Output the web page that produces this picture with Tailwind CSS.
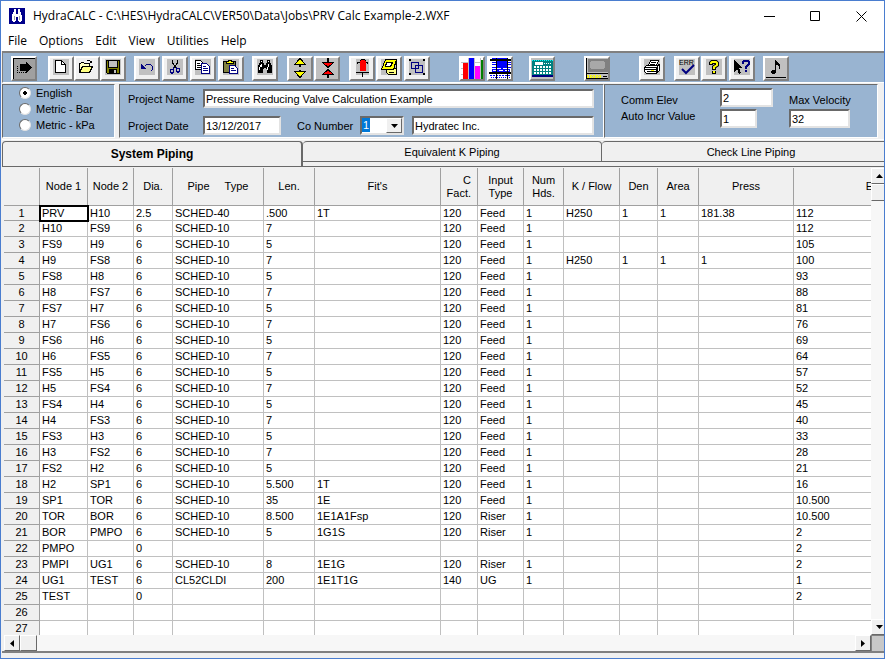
<!DOCTYPE html>
<html lang="en">
<head>
    <meta charset="UTF-8">
    <meta name="viewport" content="width=device-width, initial-scale=1.0">
    <title>HydraCALC</title>

    <!-- Tailwind CSS -->
    <script src="https://cdn.jsdelivr.net/npm/@tailwindcss/browser@4"></script>
</head>
<body class="h-screen flex flex-col overflow-hidden bg-[#f0f0f0] border border-[#4a7dcf] text-black text-[11px] leading-4 font-['Liberation_Sans',sans-serif]">

    <!-- Title bar -->
    <header class="flex items-center h-[30px] shrink-0 bg-white pl-2 font-['Open_Sans',sans-serif]">
        <svg class="size-4 mr-2" viewBox="0 0 16 16" shape-rendering="crispEdges">
            <rect width="16" height="16" fill="#00008b"/>
            <path d="M5 1h2v5h2V1h2v2l1 2 1 3v4l-1 2h-2l-1-2V9H7v3l-1 2H4l-1-2V8l1-3 1-2z" fill="#fff"/>
            <path d="M5 8h1v4H5zM10 8h1v4h-1z" fill="#a0a0a0"/>
        </svg>
        <h1 class="flex-1 text-[12px] whitespace-nowrap">HydraCALC - C:\HES\HydraCALC\VER50\Data\Jobs\PRV Calc Example-2.WXF</h1>
        <div class="flex self-stretch">
            <button aria-label="Minimize" class="w-[46px] flex items-center justify-center">
                <svg class="size-[11px]" viewBox="0 0 11 11"><path d="M0 5.5h11" stroke="#000"/></svg>
            </button>
            <button aria-label="Maximize" class="w-[46px] flex items-center justify-center">
                <svg class="size-[11px]" viewBox="0 0 11 11"><path d="M.5 .5h9v9h-9z" fill="none" stroke="#000"/></svg>
            </button>
            <button aria-label="Close" class="w-[46px] flex items-center justify-center">
                <svg class="size-[11px]" viewBox="0 0 11 11"><path d="M.5 .5l10 10M10.5 .5l-10 10" stroke="#000"/></svg>
            </button>
        </div>
    </header>

    <!-- Menu -->
    <nav class="flex items-center gap-3 h-5 shrink-0 bg-white pl-[7px] text-[12px] font-['Open_Sans',sans-serif]">
        <button>File</button>
        <button>Options</button>
        <button>Edit</button>
        <button>View</button>
        <button>Utilities</button>
        <button>Help</button>
    </nav>

    <!-- Toolbar -->
    <div class="flex items-start shrink-0 h-8 ml-px pl-[8px] pt-[3px] bg-[#99b4d1] border-t-2 border-l border-[#808080] border-b border-b-white">
        <button aria-label="Run" class="w-[26px] h-[25px] border-2 border-white border-r-[#808080] border-b-[#808080] bg-[#a0a0a0]">
            <svg class="w-[22px] h-[21px]" viewBox="0 0 22 21" shape-rendering="crispEdges">
                <path d="M.5 21V.5H22" fill="none" stroke="#000"/>
                <path d="M7 6h6V3l6 6.5-6 6.5v-3H7z"/>
                <path d="M4.5 8v7M4 14.5h9" fill="none" stroke="#000" stroke-dasharray="1 1"/>
            </svg>
        </button>

        <div class="flex ml-[11px]">
            <button aria-label="New" class="w-[26px] h-[25px] border-2 border-white border-r-[#808080] border-b-[#808080] bg-[#f0f0f0]">
                <svg class="w-[22px] h-[21px]" viewBox="0 0 22 21" shape-rendering="crispEdges">
                    <rect x="3" y="1" width="16" height="16" fill="#c0c0c0"/>
                    <path d="M5.5 2.5h6l4 4v8h-10z" fill="#fff" stroke="#000"/>
                    <path d="M11.5 2.5v4h4" fill="none" stroke="#000"/>
                </svg>
            </button>
            <button aria-label="Open" class="w-[26px] h-[25px] border-2 border-white border-r-[#808080] border-b-[#808080] bg-[#f0f0f0]">
                <svg class="w-[22px] h-[21px]" viewBox="0 0 22 21" shape-rendering="crispEdges">
                    <path d="M3.5 14.5v-9h1l1-1h2l1 1h5v3" fill="#ffffc0" stroke="#000"/>
                    <path d="M3.5 14.5l3-6h10l-3 6z" fill="#ffff80" stroke="#000"/>
                    <path d="M10.5 3.5l1-1h2l2 2m0-2v2h-2" fill="none" stroke="#000"/>
                </svg>
            </button>
            <button aria-label="Save" class="w-[26px] h-[25px] border-2 border-white border-r-[#808080] border-b-[#808080] bg-[#f0f0f0]">
                <svg class="w-[22px] h-[21px]" viewBox="0 0 22 21" shape-rendering="crispEdges">
                    <rect x="3" y="1" width="16" height="16" fill="#c0c0c0"/>
                    <path d="M4.5 2.5h13v13h-12l-1-1z" fill="#808000" stroke="#000"/>
                    <rect x="7" y="3" width="8" height="6" fill="#c0c0c0"/>
                    <path d="M6.5 3v6h9V3" fill="none" stroke="#000"/>
                    <rect x="7" y="11" width="8" height="5"/>
                    <rect x="12" y="12" width="2" height="3" fill="#c0c0c0"/>
                </svg>
            </button>
        </div>

        <div class="flex gap-0.5 ml-2">
            <button aria-label="Undo" class="w-[26px] h-[25px] border-2 border-white border-r-[#808080] border-b-[#808080] bg-[#f0f0f0]">
                <svg class="w-[22px] h-[21px]" viewBox="0 0 22 21" shape-rendering="crispEdges">
                    <rect x="3" y="1" width="16" height="16" fill="#c0c0c0"/>
                    <path d="M5 6v5h5z" fill="#000080"/>
                    <path d="M8.5 8.5l2-2h4l2 2v3l-2 2" fill="none" stroke="#000080"/>
                </svg>
            </button>
            <button aria-label="Cut" class="w-[26px] h-[25px] border-2 border-white border-r-[#808080] border-b-[#808080] bg-[#f0f0f0]">
                <svg class="w-[22px] h-[21px]" viewBox="0 0 22 21" shape-rendering="crispEdges">
                    <rect x="3" y="1" width="16" height="16" fill="#c0c0c0"/>
                    <path d="M8.5 2v3l4 5M13.5 2v3l-4 5" fill="none" stroke="#000"/>
                    <path d="M9.5 9v2h-2l-1 1v2l1 1h1l1-1v-3M12.5 9v1h2l1 1v2l-1 1h-1l-1-1v-3" fill="none" stroke="#000080"/>
                </svg>
            </button>
            <button aria-label="Copy" class="w-[26px] h-[25px] border-2 border-white border-r-[#808080] border-b-[#808080] bg-[#f0f0f0]">
                <svg class="w-[22px] h-[21px]" viewBox="0 0 22 21" shape-rendering="crispEdges">
                    <rect x="3" y="1" width="16" height="16" fill="#c0c0c0"/>
                    <path d="M3.5 2.5h5l3 3v6h-8z" fill="#fff" stroke="#000"/>
                    <path d="M5 5.5h3M5 7.5h4M5 9.5h4" stroke="#000"/>
                    <path d="M9.5 5.5h5l3 3v7h-8z" fill="#fff" stroke="#000080"/>
                    <path d="M11 8.5h3M11 10.5h5M11 12.5h5" stroke="#000080"/>
                </svg>
            </button>
            <button aria-label="Paste" class="w-[26px] h-[25px] border-2 border-white border-r-[#808080] border-b-[#808080] bg-[#f0f0f0]">
                <svg class="w-[22px] h-[21px]" viewBox="0 0 22 21" shape-rendering="crispEdges">
                    <rect x="3" y="1" width="16" height="16" fill="#c0c0c0"/>
                    <rect x="3.5" y="3.5" width="12" height="11" fill="#808040" stroke="#000"/>
                    <path d="M6.5 5.5v-2h2v-1h3v1h2v2z" fill="#ffff00" stroke="#000"/>
                    <path d="M9.5 7.5h5l3 3v5h-8z" fill="#fff" stroke="#000080"/>
                    <path d="M11 10.5h3M11 12.5h5" stroke="#000080"/>
                </svg>
            </button>
        </div>

        <button aria-label="Find" class="w-[26px] h-[25px] ml-2 border-2 border-white border-r-[#808080] border-b-[#808080] bg-[#f0f0f0]">
            <svg class="w-[22px] h-[21px]" viewBox="0 0 22 21" shape-rendering="crispEdges">
                <rect x="3" y="1" width="16" height="16" fill="#c0c0c0"/>
                <path d="M6 2h3v3h1v2h2V5h1V2h3v3h1l1 4v6h-5v-4h-1v-1h-2v1H9v4H4V9l1-4h1z"/>
                <path d="M7 3h1v1H7zM14 3h1v1h-1zM7 6h1v3H6v3H5V9l1-1zM14 6h1v3h-1v3h-1V9h1z" fill="#fff"/>
            </svg>
        </button>

        <div class="flex gap-px ml-[9px]">
            <button aria-label="Expand" class="w-[26px] h-[25px] border-2 border-white border-r-[#808080] border-b-[#808080] bg-[#c0c0c0]">
                <svg class="w-[22px] h-[21px]" viewBox="0 0 22 21" shape-rendering="crispEdges">
                    <path d="M11 6v3M11 12v3" stroke="#000" stroke-width="2"/>
                    <path d="M11 .5l5.5 6h-11zM11 19.5l5.5-6h-11z" fill="#ffff00" stroke="#000"/>
                </svg>
            </button>
            <button aria-label="Collapse" class="w-[26px] h-[25px] border-2 border-white border-r-[#808080] border-b-[#808080] bg-[#c0c0c0]">
                <svg class="w-[22px] h-[21px]" viewBox="0 0 22 21" shape-rendering="crispEdges">
                    <path d="M12 0v20" stroke="#000" stroke-width="2"/>
                    <rect x="11" y="10" width="2" height="1" fill="#c0c0c0"/>
                    <path d="M12 9.5l5.5-5h-11zM12 11.5l5.5 5h-11z" fill="#ff0000" stroke="#000"/>
                </svg>
            </button>
        </div>

        <div class="flex gap-px ml-[9px]">
            <button aria-label="Hydrant" class="w-[26px] h-[25px] border-2 border-white border-r-[#808080] border-b-[#808080] bg-[#f0f0f0]">
                <svg class="w-[22px] h-[21px]" viewBox="0 0 22 21" shape-rendering="crispEdges">
                    <rect x="5" y="1" width="13" height="16" fill="#c0c0c0"/>
                    <path d="M6 4.5h11M6.5 4v2M16.5 4v2M5 14.5h13M11.5 14v5" stroke="#000"/>
                    <path d="M10 2h4l1 1v10H9V3z" fill="#ff0000"/>
                    <path d="M9 2.5h1M14 2.5h1M10 1.5h4" stroke="#000"/>
                </svg>
            </button>
            <button aria-label="Notes" class="w-[26px] h-[25px] border-2 border-white border-r-[#808080] border-b-[#808080] bg-[#f0f0f0]">
                <svg class="w-[22px] h-[21px]" viewBox="0 0 22 21" shape-rendering="crispEdges">
                    <rect x="3" y="1" width="16" height="16" fill="#c0c0c0"/>
                    <path d="M8.5 10.5h10v6h-8l-2-2z" fill="#ffff80" stroke="#000"/>
                    <path d="M7.5 1.5h11l-3 10h-12z" fill="#ffff00" stroke="#000"/>
                    <path d="M8.5 4.5h6l-2 4h-5z" fill="#fff" stroke="#000"/>
                    <path d="M18.5 2v13M11 14.5h5" stroke="#000"/>
                </svg>
            </button>
            <button aria-label="Group" class="w-[26px] h-[25px] ml-px border-2 border-white border-r-[#808080] border-b-[#808080] bg-[#f0f0f0]">
                <svg class="w-[22px] h-[21px]" viewBox="0 0 22 21" shape-rendering="crispEdges">
                    <rect x="3" y="1" width="16" height="16" fill="#c0c0c0"/>
                    <path d="M5.5 4.5h7v6h-7zM9.5 7.5h7v7h-7z" fill="none" stroke="#000080"/>
                    <path d="M3 1h2v2H3zM17 1h2v2h-2zM3 15h2v2H3zM17 15h2v2h-2z"/>
                </svg>
            </button>
        </div>

        <div class="flex gap-0.5 ml-[29px]">
            <button aria-label="Graph" class="w-[26px] h-[25px] border-2 border-white border-r-[#808080] border-b-[#808080] bg-white">
                <svg class="w-[22px] h-[21px]" viewBox="0 0 22 21" shape-rendering="crispEdges">
                    <path d="M0 4.5h22M0 10.5h22M0 16.5h22M7.5 0v21M13.5 0v21M19.5 0v21" stroke="#c0c0c0"/>
                    <rect x="2" y="5" width="5" height="16" fill="#ff0000"/>
                    <rect x="8" y="0" width="5" height="21" fill="#0000ff"/>
                    <rect x="14" y="8" width="5" height="13" fill="#ff00ff"/>
                    <rect x="20" y="2" width="2" height="19" fill="#008000"/>
                </svg>
            </button>
            <button aria-label="Hydraulic grid" class="w-[26px] h-[25px] border-2 border-white border-r-[#808080] border-b-[#808080] bg-white">
                <svg class="w-[22px] h-[21px]" viewBox="0 0 22 21" shape-rendering="crispEdges">
                    <path d="M7 0h11v11H7zM3 11h18v3H3z" fill="#0000ff"/>
                    <path d="M3 .5h4M3 4.5h4M18 4.5h4M3 6.5h4M18 6.5h4M3 9.5h4M18 9.5h4" stroke="#0000ff"/>
                    <path d="M8 10.5h10M4 12.5h16" stroke="#fff" stroke-dasharray="4 2"/>
                    <path d="M1 17.5h20" stroke="#0000ff" stroke-dasharray="2 1"/>
                    <path d="M2 19.5h20" stroke="#0000ff" stroke-dasharray="1 1"/>
                    <path d="M1 2h21M0 15h22" stroke="#000" stroke-width="2"/>
                    <path d="M7.5 0v21M18.5 0v21" stroke="#000"/>
                </svg>
            </button>
        </div>

        <button aria-label="Calculator" class="w-[26px] h-[25px] ml-4 border-2 border-white border-r-[#808080] border-b-[#808080] bg-[#c0c0c0]">
            <svg class="w-[22px] h-[21px]" viewBox="0 0 22 21" shape-rendering="crispEdges">
                <rect x="1" y="2" width="21" height="15" fill="#008080"/>
                <path d="M1 2.5h21" stroke="#00ffff" stroke-dasharray="1 1"/>
                <rect x="4" y="4" width="8" height="3" fill="#fff"/>
                <path d="M13 5.5h7" stroke="#fff" stroke-dasharray="1 1"/>
                <path d="M3 9h17M3 12h17M3 15h17" stroke="#fff" stroke-width="2" stroke-dasharray="2 1"/>
                <rect x="1" y="17" width="21" height="2" fill="#000080"/>
            </svg>
        </button>

        <button aria-label="Display" class="w-[26px] h-[25px] ml-[29px] border-2 border-white border-r-[#808080] border-b-[#808080] bg-[#c0c0c0]">
            <svg class="w-[22px] h-[21px]" viewBox="0 0 22 21" shape-rendering="crispEdges">
                <path d="M0 0h1v21H0z"/>
                <rect x="2" y="1" width="20" height="13" fill="#808080"/>
                <rect x="4" y="3" width="15" height="8" rx="3" fill="#a8a8a8"/>
                <path d="M1 15.5h21" stroke="#000"/>
                <rect x="1" y="17" width="20" height="3" fill="#c0c0c0"/>
                <path d="M1 17.5h14M1 19.5h14" stroke="#ffff00" stroke-dasharray="2 1"/>
                <path d="M2 18.5h14" stroke="#ffff00" stroke-dasharray="1 1"/>
                <path d="M17 18.5h4M0 20.5h22" stroke="#000"/>
            </svg>
        </button>

        <button aria-label="Print" class="w-[26px] h-[25px] ml-[29px] border-2 border-white border-r-[#808080] border-b-[#808080] bg-[#f0f0f0]">
            <svg class="w-[22px] h-[21px]" viewBox="0 0 22 21" shape-rendering="crispEdges">
                <rect x="3" y="1" width="16" height="16" fill="#c0c0c0"/>
                <path d="M7.5 7.5l2-5h8l-2 5" fill="#fff" stroke="#000"/>
                <path d="M10 4.5h5M9 6.5h5" stroke="#000"/>
                <path d="M3.5 9.5l2-2h11l2-1v6l-3 3h-10l-2-2z" fill="#fff" stroke="#000"/>
                <path d="M3 9.5h12v6M4 11.5h11M6 13.5h9M16.5 8v6" fill="none" stroke="#000"/>
                <path d="M10 12.5h3" stroke="#ffff00"/>
            </svg>
        </button>

        <div class="flex gap-px ml-[9px]">
            <button aria-label="Error check" class="w-[26px] h-[25px] border-2 border-white border-r-[#808080] border-b-[#808080] bg-[#f0f0f0]">
                <svg class="w-[22px] h-[21px]" viewBox="0 0 22 21">
                    <rect x="3" y="1" width="16" height="16" fill="#c0c0c0"/>
                    <text x="3" y="7" font-size="7" font-family="Liberation Sans">ERR</text>
                    <path d="M6 11l4 4 8-8" fill="none" stroke="#000080" stroke-width="2"/>
                </svg>
            </button>
            <button aria-label="Help" class="w-[26px] h-[25px] border-2 border-white border-r-[#808080] border-b-[#808080] bg-[#f0f0f0]">
                <svg class="w-[22px] h-[21px]" viewBox="0 0 22 21" fill="none">
                    <rect x="3" y="1" width="16" height="16" fill="#c0c0c0"/>
                    <path d="M8 7V5l1-1h4l1 1v2l-3 2v3M11 13v3" stroke="#000" stroke-width="4"/>
                    <path d="M8 6V5l1-1h4l1 1v2l-3 2v2M11 13v2" stroke="#ffff00" stroke-width="2"/>
                </svg>
            </button>
            <button aria-label="Context help" class="w-[26px] h-[25px] ml-px border-2 border-white border-r-[#808080] border-b-[#808080] bg-[#f0f0f0]">
                <svg class="w-[22px] h-[21px]" viewBox="0 0 22 21" shape-rendering="crispEdges">
                    <rect x="3" y="1" width="16" height="16" fill="#c0c0c0"/>
                    <path d="M3 2l8 8H8l2 5-2 1-2-5-3 3z"/>
                    <path d="M12 6V4l1-1h4l1 1v2l-3 3v2M15 12v2" fill="none" stroke="#000080" stroke-width="2"/>
                </svg>
            </button>
        </div>

        <button aria-label="Sound" class="w-[26px] h-[25px] ml-2 border-2 border-white border-r-[#808080] border-b-[#808080] bg-[#c0c0c0]">
            <svg class="w-[22px] h-[21px]" viewBox="0 0 22 21" shape-rendering="crispEdges">
                <path d="M10 2h1l1 2 3 3v4h-1V8l-3-1v7l-1 2H7l-1-1v-2l1-1h3z"/>
                <path d="M1 19.5h20" stroke="#000"/>
            </svg>
        </button>
    </div>

    <!-- Job settings -->
    <form class="flex shrink-0 h-[56px] ml-px mt-px pb-px pr-[6px] border-b border-white">
        <fieldset class="w-[113px] mr-1 pl-4 shrink-0 bg-[#99b4d1] border border-[#696969] border-r-white border-b-white">
            <label class="flex items-center gap-[5px] h-4">
                <input type="radio" name="units" checked class="appearance-none size-3 rounded-full bg-white border border-[#696969] border-r-[#e3e3e3] border-b-[#e3e3e3] checked:bg-[radial-gradient(#000_0_2px,#fff_2px)]">English
            </label>
            <label class="flex items-center gap-[5px] h-4">
                <input type="radio" name="units" class="appearance-none size-3 rounded-full bg-white border border-[#696969] border-r-[#e3e3e3] border-b-[#e3e3e3]">Metric - Bar
            </label>
            <label class="flex items-center gap-[5px] h-4">
                <input type="radio" name="units" class="appearance-none size-3 rounded-full bg-white border border-[#696969] border-r-[#e3e3e3] border-b-[#e3e3e3]">Metric - kPa
            </label>
        </fieldset>

        <div class="flex-1 flex flex-col gap-2 pl-2 pr-[9px] pt-1 bg-[#99b4d1] border border-[#696969] border-r-white border-b-white">
            <div class="flex items-center">
                <label for="project" class="w-[75px] shrink-0">Project Name</label>
                <input id="project" value="Pressure Reducing Valve Calculation Example" class="flex-1 min-w-0 h-[19px] px-px bg-white border-2 border-[#696969] border-r-[#e3e3e3] border-b-[#e3e3e3]">
            </div>
            <div class="flex items-center">
                <label for="date" class="w-[75px] shrink-0">Project Date</label>
                <input id="date" value="13/12/2017" class="w-[78px] h-[19px] px-px bg-white border-2 border-[#696969] border-r-[#e3e3e3] border-b-[#e3e3e3]">
                <label for="company" class="ml-4 w-[63px] shrink-0">Co Number</label>
                <div class="relative w-11 h-[19px] mr-2 bg-white border-2 border-[#696969] border-r-[#e3e3e3] border-b-[#e3e3e3]">
                    <select id="company" class="appearance-none w-full h-[15px] pl-px leading-[15px]">
                        <option>1</option>
                    </select>
                    <span class="absolute left-0 top-0 w-[8px] h-[14px] bg-[#0078d7] text-white leading-[15px] pl-px pointer-events-none" aria-hidden="true">1</span>
                    <span class="absolute right-0 top-0 w-4 h-[15px] flex items-center justify-center bg-[#f0f0f0] border border-white border-r-[#696969] border-b-[#696969] pointer-events-none">
                        <svg class="w-[7px] h-1" viewBox="0 0 7 4"><path d="M0 0h7L3.5 4z"/></svg>
                    </span>
                </div>
                <input aria-label="Company" value="Hydratec Inc." class="flex-1 min-w-0 h-[19px] px-px bg-white border-2 border-[#696969] border-r-[#e3e3e3] border-b-[#e3e3e3]">
            </div>
        </div>

        <div class="w-[274px] shrink-0 flex pl-4 pt-[3px] bg-[#99b4d1] border border-[#696969] border-r-white border-b-white">
            <div class="w-[99px] pt-1">
                <label for="elev" class="block">Comm Elev</label>
                <label for="incr" class="block">Auto Incr Value</label>
            </div>
            <div class="w-[69px] flex flex-col gap-[2px]">
                <input id="elev" value="2" class="w-[53px] h-[19px] px-px bg-white border-2 border-[#696969] border-r-[#e3e3e3] border-b-[#e3e3e3]">
                <input id="incr" value="1" class="w-[37px] h-[19px] px-px bg-white border-2 border-[#696969] border-r-[#e3e3e3] border-b-[#e3e3e3]">
            </div>
            <div class="flex flex-col gap-px pt-1">
                <label for="velocity">Max Velocity</label>
                <input id="velocity" value="32" class="w-[61px] h-[19px] px-px bg-white border-2 border-[#696969] border-r-[#e3e3e3] border-b-[#e3e3e3]">
            </div>
        </div>
    </form>

    <!-- Tabs, the last one runs past the window edge -->
    <div role="tablist" class="flex items-start shrink-0 h-[26px] ml-px -mr-4 mt-px border-b border-[#696969]">
        <button role="tab" aria-selected="true" class="flex-1 h-[25px] text-[12px] font-bold border-t border-l border-r-2 border-[#696969] rounded-t-[4px]">System Piping</button>
        <button role="tab" aria-selected="false" class="flex-1 h-[21px] border border-l-0 border-[#696969] rounded-t-[4px]">Equivalent K Piping</button>
        <button role="tab" aria-selected="false" class="flex-1 h-[21px] border border-r-0 border-l-0 border-[#696969] rounded-tl-[4px]">Check Line Piping</button>
    </div>

    <!-- Pipe grid -->
    <div class="flex flex-1 min-h-0 ml-[3px] mt-px">
        <div class="flex-1 min-w-0 overflow-hidden bg-white">
            <table class="table-fixed w-[956px] border-separate border-spacing-0">
                <colgroup>
                    <col class="w-[36px]">
                    <col class="w-[48px]">
                    <col class="w-[46px]">
                    <col class="w-[39px]">
                    <col class="w-[91px]">
                    <col class="w-[51px]">
                    <col class="w-[126px]">
                    <col class="w-[37px]">
                    <col class="w-[46px]">
                    <col class="w-[40px]">
                    <col class="w-[56px]">
                    <col class="w-[38px]">
                    <col class="w-[41px]">
                    <col class="w-[95px]">
                    <col class="w-[166px]">
                </colgroup>
                <thead>
                    <tr id="head" class="h-[38px]"></tr>
                </thead>
                <tbody id="rows"></tbody>
            </table>
        </div>
        <div class="w-[13px] shrink-0 flex flex-col overflow-hidden bg-[#f7f7f7]">
            <button aria-label="Scroll up" class="w-4 h-4 shrink-0 flex items-center justify-center bg-[#f0f0f0] border border-white border-b-[#696969]">
                <svg class="w-[7px] h-1" viewBox="0 0 7 4"><path d="M0 4h7L3.5 0z"/></svg>
            </button>
            <div class="w-4 h-[17px] bg-[#f0f0f0] border border-white border-b-[#696969]"></div>
            <div class="flex-1"></div>
            <button aria-label="Scroll down" class="w-4 h-4 shrink-0 flex items-center justify-center bg-[#f0f0f0] border border-white border-b-[#696969]">
                <svg class="w-[7px] h-1" viewBox="0 0 7 4"><path d="M0 0h7L3.5 4z"/></svg>
            </button>
        </div>
    </div>

    <!-- Horizontal scroll bar -->
    <div class="flex shrink-0 h-4 ml-[3px] bg-[#f7f7f7]">
        <button aria-label="Scroll left" class="w-4 flex items-center justify-center bg-[#f0f0f0] border border-white border-r-[#696969] border-b-[#696969]">
            <svg class="w-1 h-[7px]" viewBox="0 0 4 7"><path d="M4 0v7L0 3.5z"/></svg>
        </button>
        <div class="w-[17px] bg-[#f0f0f0] border border-white border-r-[#696969] border-b-[#696969]"></div>
        <div class="flex-1"></div>
        <button aria-label="Scroll right" class="w-4 flex items-center justify-center bg-[#f0f0f0] border border-white border-r-[#696969] border-b-[#696969]">
            <svg class="w-1 h-[7px]" viewBox="0 0 4 7"><path d="M0 0v7l4-3.5z"/></svg>
        </button>
        <div class="w-[13px] bg-[#c8c8c8] border-t border-l border-[#808080]"></div>
    </div>
    <div class="shrink-0 h-[7px] ml-px border-t-2 border-[#808080]"></div>

    <script>
        const headers = ["", "Node 1", "Node 2", "Dia.", "Pipe     Type", "Len.", "Fit's", "C\nFact.", "Input\nType", "Num\nHds.", "K / Flow", "Den", "Area", "Press", "Elev"];

        // node 1, node 2, dia, pipe type, length, fittings, C, input, heads, K/flow, den, area, press, elev
        const pipes = [
            ["PRV", "H10", "2.5", "SCHED-40", ".500", "1T", "120", "Feed", "1", "H250", "1", "1", "181.38", "112"],
            ["H10", "FS9", "6", "SCHED-10", "7", "", "120", "Feed", "1", "", "", "", "", "112"],
            ["FS9", "H9", "6", "SCHED-10", "5", "", "120", "Feed", "1", "", "", "", "", "105"],
            ["H9", "FS8", "6", "SCHED-10", "7", "", "120", "Feed", "1", "H250", "1", "1", "1", "100"],
            ["FS8", "H8", "6", "SCHED-10", "5", "", "120", "Feed", "1", "", "", "", "", "93"],
            ["H8", "FS7", "6", "SCHED-10", "7", "", "120", "Feed", "1", "", "", "", "", "88"],
            ["FS7", "H7", "6", "SCHED-10", "5", "", "120", "Feed", "1", "", "", "", "", "81"],
            ["H7", "FS6", "6", "SCHED-10", "7", "", "120", "Feed", "1", "", "", "", "", "76"],
            ["FS6", "H6", "6", "SCHED-10", "5", "", "120", "Feed", "1", "", "", "", "", "69"],
            ["H6", "FS5", "6", "SCHED-10", "7", "", "120", "Feed", "1", "", "", "", "", "64"],
            ["FS5", "H5", "6", "SCHED-10", "5", "", "120", "Feed", "1", "", "", "", "", "57"],
            ["H5", "FS4", "6", "SCHED-10", "7", "", "120", "Feed", "1", "", "", "", "", "52"],
            ["FS4", "H4", "6", "SCHED-10", "5", "", "120", "Feed", "1", "", "", "", "", "45"],
            ["H4", "FS3", "6", "SCHED-10", "7", "", "120", "Feed", "1", "", "", "", "", "40"],
            ["FS3", "H3", "6", "SCHED-10", "5", "", "120", "Feed", "1", "", "", "", "", "33"],
            ["H3", "FS2", "6", "SCHED-10", "7", "", "120", "Feed", "1", "", "", "", "", "28"],
            ["FS2", "H2", "6", "SCHED-10", "5", "", "120", "Feed", "1", "", "", "", "", "21"],
            ["H2", "SP1", "6", "SCHED-10", "5.500", "1T", "120", "Feed", "1", "", "", "", "", "16"],
            ["SP1", "TOR", "6", "SCHED-10", "35", "1E", "120", "Feed", "1", "", "", "", "", "10.500"],
            ["TOR", "BOR", "6", "SCHED-10", "8.500", "1E1A1Fsp", "120", "Riser", "1", "", "", "", "", "10.500"],
            ["BOR", "PMPO", "6", "SCHED-10", "5", "1G1S", "120", "Riser", "1", "", "", "", "", "2"],
            ["PMPO", "", "0", "", "", "", "", "", "", "", "", "", "", "2"],
            ["PMPI", "UG1", "6", "SCHED-10", "8", "1E1G", "120", "Riser", "1", "", "", "", "", "2"],
            ["UG1", "TEST", "6", "CL52CLDI", "200", "1E1T1G", "140", "UG", "1", "", "", "", "", "1"],
            ["TEST", "", "0", "", "", "", "", "", "", "", "", "", "", "2"],
            Array(14).fill(""),
            Array(14).fill("")
        ];

        document.getElementById("head").innerHTML = headers.map((h, i) =>
            `<th class="p-0 bg-[#f0f0f0] border-r border-b border-[#a0a0a0] font-normal leading-[13px] whitespace-pre ${i === 7 ? "text-right pr-1.5" : "text-center"}">${h}</th>`
        ).join("");

        document.getElementById("rows").innerHTML = pipes.map((row, r) => {
            const cells = row.map((value, c) => {
                const selected = r === 0 && c === 0 ? "outline-2 -outline-offset-1 outline-black" : "";
                return `<td class="p-0 pl-[2px] border-r border-b border-[#c0c0c0] ${selected}">${value}</td>`;
            }).join("");
            const height = r === 0 ? "h-[15px] leading-[14px]" : "h-4 leading-[15px]";
            return `<tr class="${height}"><th class="p-0 bg-[#f0f0f0] border-r border-b border-[#a0a0a0] font-normal text-center">${r + 1}</th>${cells}</tr>`;
        }).join("");
    </script>

</body>
</html>
